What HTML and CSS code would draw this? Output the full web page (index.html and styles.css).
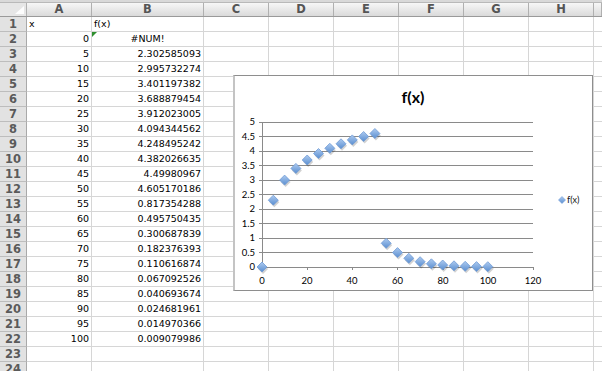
FILE: index.html
```html
<!DOCTYPE html>
<html lang="en">
<head>
    <meta charset="UTF-8">
    <title>f(x)</title>
    <link rel="stylesheet" href="styles.css">
</head>
<body>
    <div class="topbar"></div>
    <div class="sheet">
        <div class="colhead">
            <div class="corner"></div>
            <div>A</div><div>B</div><div>C</div><div>D</div><div>E</div><div>F</div><div>G</div><div>H</div><div></div>
        </div>
        <div class="row"><div class="rh">1</div><div class="c">x</div><div class="c">f(x)</div><div class="rest"></div></div>
        <div class="row"><div class="rh">2</div><div class="c num">0</div><div class="c err">#NUM!</div><div class="rest"></div></div>
        <div class="row"><div class="rh">3</div><div class="c num">5</div><div class="c num">2.302585093</div><div class="rest"></div></div>
        <div class="row"><div class="rh">4</div><div class="c num">10</div><div class="c num">2.995732274</div><div class="rest"></div></div>
        <div class="row"><div class="rh">5</div><div class="c num">15</div><div class="c num">3.401197382</div><div class="rest"></div></div>
        <div class="row"><div class="rh">6</div><div class="c num">20</div><div class="c num">3.688879454</div><div class="rest"></div></div>
        <div class="row"><div class="rh">7</div><div class="c num">25</div><div class="c num">3.912023005</div><div class="rest"></div></div>
        <div class="row"><div class="rh">8</div><div class="c num">30</div><div class="c num">4.094344562</div><div class="rest"></div></div>
        <div class="row"><div class="rh">9</div><div class="c num">35</div><div class="c num">4.248495242</div><div class="rest"></div></div>
        <div class="row"><div class="rh">10</div><div class="c num">40</div><div class="c num">4.382026635</div><div class="rest"></div></div>
        <div class="row"><div class="rh">11</div><div class="c num">45</div><div class="c num">4.49980967</div><div class="rest"></div></div>
        <div class="row"><div class="rh">12</div><div class="c num">50</div><div class="c num">4.605170186</div><div class="rest"></div></div>
        <div class="row"><div class="rh">13</div><div class="c num">55</div><div class="c num">0.817354288</div><div class="rest"></div></div>
        <div class="row"><div class="rh">14</div><div class="c num">60</div><div class="c num">0.495750435</div><div class="rest"></div></div>
        <div class="row"><div class="rh">15</div><div class="c num">65</div><div class="c num">0.300687839</div><div class="rest"></div></div>
        <div class="row"><div class="rh">16</div><div class="c num">70</div><div class="c num">0.182376393</div><div class="rest"></div></div>
        <div class="row"><div class="rh">17</div><div class="c num">75</div><div class="c num">0.110616874</div><div class="rest"></div></div>
        <div class="row"><div class="rh">18</div><div class="c num">80</div><div class="c num">0.067092526</div><div class="rest"></div></div>
        <div class="row"><div class="rh">19</div><div class="c num">85</div><div class="c num">0.040693674</div><div class="rest"></div></div>
        <div class="row"><div class="rh">20</div><div class="c num">90</div><div class="c num">0.024681961</div><div class="rest"></div></div>
        <div class="row"><div class="rh">21</div><div class="c num">95</div><div class="c num">0.014970366</div><div class="rest"></div></div>
        <div class="row"><div class="rh">22</div><div class="c num">100</div><div class="c num">0.009079986</div><div class="rest"></div></div>
        <div class="row"><div class="rh">23</div><div class="c"></div><div class="c"></div><div class="rest"></div></div>
        <div class="row"><div class="rh">24</div><div class="c"></div><div class="c"></div><div class="rest"></div></div>
    </div>

    <!-- scatter chart floating over the sheet -->
    <div class="chart">
        <svg width="357" height="214" viewBox="2 1 357 214">
            <defs>
                <linearGradient id="mk" x1="0" y1="0" x2="0" y2="1">
                    <stop offset="0" stop-color="#aecbf0"/>
                    <stop offset="1" stop-color="#5a8ed0"/>
                </linearGradient>
                <g id="dm">
                    <path d="M1 -3 L6 2 L1 7 L-4 2Z" fill="#000" opacity="0.18"/>
                    <path d="M0 -5 L5 0 L0 5 L-5 0Z" fill="url(#mk)" stroke="#6f9bd6" stroke-width="0.8"/>
                </g>
            </defs>

            <text class="title" x="180" y="28" text-anchor="middle">f(x)</text>

            <g stroke="#8a8a8a" stroke-width="1" shape-rendering="crispEdges">
                <line x1="29" y1="47" x2="300" y2="47"/>
                <line x1="29" y1="61.5" x2="300" y2="61.5"/>
                <line x1="29" y1="76" x2="300" y2="76"/>
                <line x1="29" y1="90.5" x2="300" y2="90.5"/>
                <line x1="29" y1="105" x2="300" y2="105"/>
                <line x1="29" y1="119.5" x2="300" y2="119.5"/>
                <line x1="29" y1="134" x2="300" y2="134"/>
                <line x1="29" y1="148.5" x2="300" y2="148.5"/>
                <line x1="29" y1="163" x2="300" y2="163"/>
                <line x1="29" y1="177.5" x2="300" y2="177.5"/>
                <line x1="29" y1="192" x2="300" y2="192"/>
                <line x1="29" y1="47" x2="29" y2="192"/>
            </g>
            <g stroke="#8a8a8a" stroke-width="1" shape-rendering="crispEdges">
                <line x1="26" y1="47" x2="29" y2="47"/>
                <line x1="26" y1="61.5" x2="29" y2="61.5"/>
                <line x1="26" y1="76" x2="29" y2="76"/>
                <line x1="26" y1="90.5" x2="29" y2="90.5"/>
                <line x1="26" y1="105" x2="29" y2="105"/>
                <line x1="26" y1="119.5" x2="29" y2="119.5"/>
                <line x1="26" y1="134" x2="29" y2="134"/>
                <line x1="26" y1="148.5" x2="29" y2="148.5"/>
                <line x1="26" y1="163" x2="29" y2="163"/>
                <line x1="26" y1="177.5" x2="29" y2="177.5"/>
                <line x1="26" y1="192" x2="29" y2="192"/>
                <line x1="29" y1="192" x2="29" y2="195"/>
                <line x1="74" y1="192" x2="74" y2="195"/>
                <line x1="119" y1="192" x2="119" y2="195"/>
                <line x1="164" y1="192" x2="164" y2="195"/>
                <line x1="210" y1="192" x2="210" y2="195"/>
                <line x1="255" y1="192" x2="255" y2="195"/>
                <line x1="300" y1="192" x2="300" y2="195"/>
            </g>

            <g class="axis" text-anchor="end">
                <text x="22" y="50">5</text>
                <text x="22" y="64.5">4.5</text>
                <text x="22" y="79">4</text>
                <text x="22" y="93.5">3.5</text>
                <text x="22" y="108">3</text>
                <text x="22" y="122.5">2.5</text>
                <text x="22" y="137">2</text>
                <text x="22" y="151.5">1.5</text>
                <text x="22" y="166">1</text>
                <text x="22" y="180.5">0.5</text>
                <text x="22" y="195">0</text>
            </g>
            <g class="axis" text-anchor="middle">
                <text x="29" y="209">0</text>
                <text x="74" y="209">20</text>
                <text x="119" y="209">40</text>
                <text x="164.5" y="209">60</text>
                <text x="210" y="209">80</text>
                <text x="255" y="209">100</text>
                <text x="300" y="209">120</text>
            </g>

            <use href="#dm" x="29" y="192"/>
            <use href="#dm" x="40.3" y="125.2"/>
            <use href="#dm" x="51.6" y="105.1"/>
            <use href="#dm" x="62.9" y="93.4"/>
            <use href="#dm" x="74.2" y="85"/>
            <use href="#dm" x="85.5" y="78.5"/>
            <use href="#dm" x="96.8" y="73.3"/>
            <use href="#dm" x="108" y="68.8"/>
            <use href="#dm" x="119.3" y="64.9"/>
            <use href="#dm" x="130.6" y="61.5"/>
            <use href="#dm" x="141.9" y="58.5"/>
            <use href="#dm" x="153.2" y="168.3"/>
            <use href="#dm" x="164.5" y="177.6"/>
            <use href="#dm" x="175.8" y="183.3"/>
            <use href="#dm" x="187.1" y="186.7"/>
            <use href="#dm" x="198.4" y="188.8"/>
            <use href="#dm" x="209.7" y="190"/>
            <use href="#dm" x="221" y="190.8"/>
            <use href="#dm" x="232.2" y="191.3"/>
            <use href="#dm" x="243.5" y="191.6"/>
            <use href="#dm" x="254.8" y="191.7"/>

            <path d="M329 121.5 L332.5 125 L329 128.5 L325.5 125Z" fill="url(#mk)" stroke="#6f9bd6" stroke-width="0.6"/>
            <text class="legend" x="334" y="128">f(x)</text>
        </svg>
    </div>
</body>
</html>
```

FILE: styles.css
```css
body {
    margin: 0;
    height: 371px;
    overflow: hidden;
    background-color: #fff;
    font-family: "DejaVu Sans", Verdana, sans-serif;
}

.topbar {
    height: 3px;
    box-sizing: border-box;
    background-color: #d9d9d9;
    border-bottom: 1px solid #b9b9b9;
}

/* column letters */
.colhead {
    display: grid;
    grid-template-columns: 27px 65px 112px repeat(6, 65px) 1fr;
    height: 14px;
    box-sizing: border-box;
    background: linear-gradient(#f7f7f7, #dadada);
    border-bottom: 1px solid #9a9a9a;
}

.colhead div {
    box-sizing: border-box;
    border-right: 1px solid #b0b0b0;
    text-align: center;
    font-size: 11.5px;
    font-weight: bold;
    line-height: 13px;
    color: #555;
}

.colhead .corner {
    position: relative;
    background-color: #e6e6e6;
}

.corner::after {
    content: '';
    position: absolute;
    right: 2px;
    bottom: 2px;
    border-left: 9px solid transparent;
    border-bottom: 8px solid #fdfdfd;
}

/* data rows */
.row {
    display: grid;
    grid-template-columns: 27px 65px 112px 1fr;
    height: 15px;
    box-sizing: border-box;
    border-bottom: 1px solid #d6d6d6;
}

.rh {
    box-sizing: border-box;
    background-color: #e2e2e2;
    border-right: 1px solid #a9a9a9;
    margin-bottom: -1px;
    border-bottom: 1px solid #bdbdbd;
    text-align: center;
    font-size: 11.5px;
    font-weight: bold;
    line-height: 14px;
    color: #5a5a5a;
}

.c {
    position: relative;
    box-sizing: border-box;
    border-right: 1px solid #d6d6d6;
    padding: 0 2px;
    font-size: 9.5px;
    line-height: 14px;
    color: #000;
    white-space: nowrap;
    overflow: hidden;
}

.num {
    text-align: right;
}

.err {
    text-align: center;
}

/* green error marker */
.err::before {
    content: '';
    position: absolute;
    left: 0;
    top: 0;
    border-top: 5px solid #2f8f2f;
    border-right: 5px solid transparent;
}

.rest {
    background: repeating-linear-gradient(to right, transparent 0 64px, #d6d6d6 64px 65px);
}

/* chart */
.chart {
    position: absolute;
    left: 233px;
    top: 75px;
    width: 360px;
    height: 216px;
    box-sizing: border-box;
    background-color: #fff;
    border: 1px solid #8e8e8e;
    border-left: 2px solid #c4c4c4;
}

.chart svg {
    display: block;
    font-family: Lato, "Open Sans", sans-serif;
}

.title {
    font-size: 16px;
    font-weight: bold;
    fill: #000;
}

.axis {
    font-size: 9.5px;
    fill: #000;
}

.legend {
    font-size: 9px;
    fill: #111;
}
```
